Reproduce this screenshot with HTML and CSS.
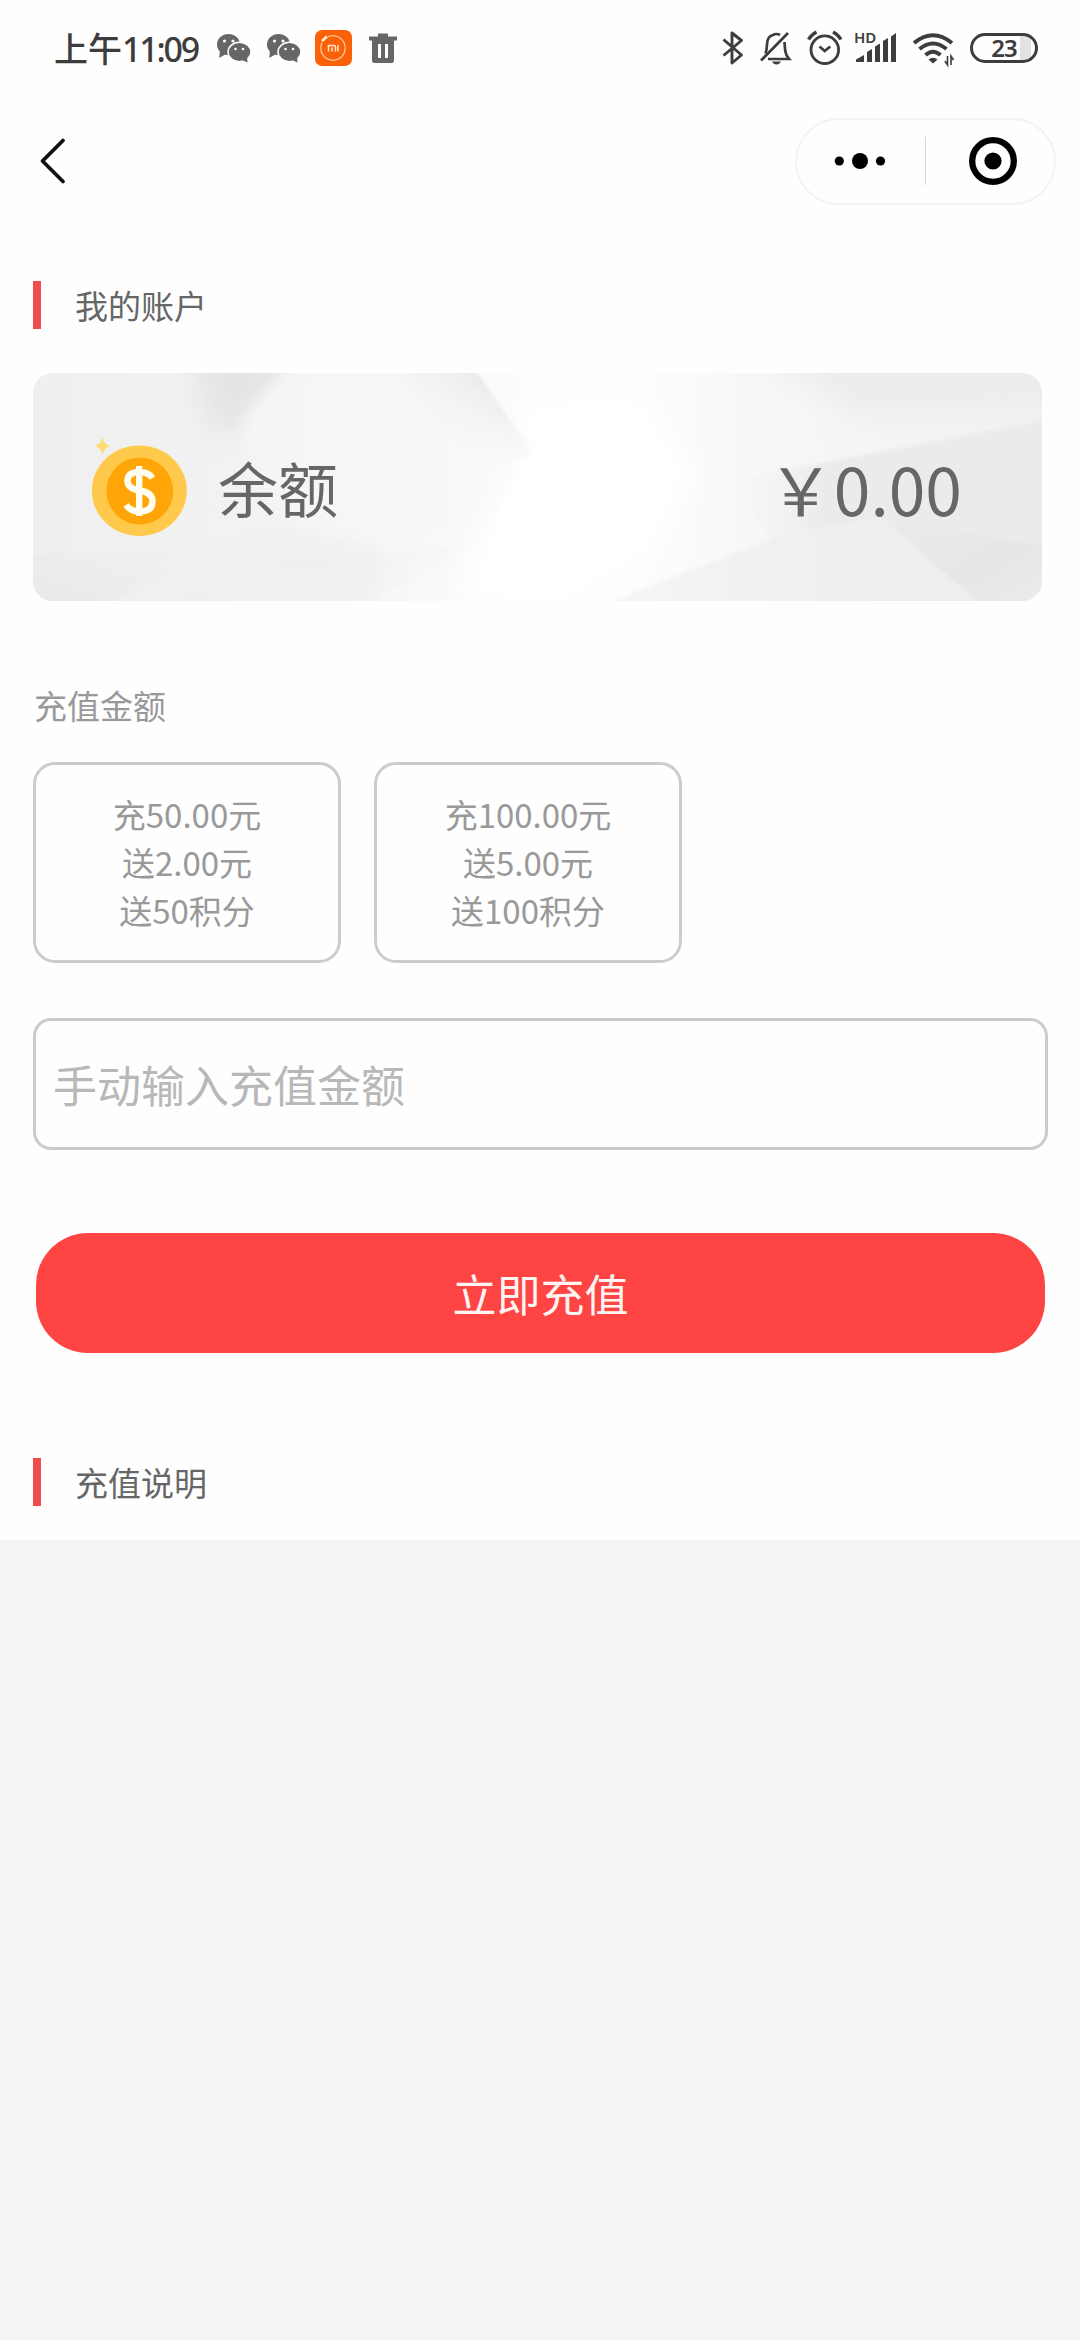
FILE: index.html
```html
<!DOCTYPE html>
<html lang="zh-CN">
<head>
<meta charset="utf-8">
<title>我的账户</title>
<link rel="stylesheet" href="styles.css">
</head>
<body>
<main class="page">
  <header class="status">
    <div class="time">上午<span class="clock">11:09</span></div>
    <svg class="ic wechat" viewBox="217 28 33 40" width="33" height="40"><g fill="#666"><ellipse cx="228.500" cy="44.500" rx="11.500" ry="10.500"/><path d="M220 51l-.8 7 6-3.500z"/><ellipse cx="239.500" cy="52" rx="11.500" ry="9.800" stroke="#fff" stroke-width="1.500"/><path d="M242 60l5.500 2.500-.5-6z"/></g><g fill="#fff"><circle cx="224.500" cy="41" r="1.600"/><circle cx="233" cy="41" r="1.600"/><circle cx="235.500" cy="49" r="1.300"/><circle cx="243" cy="49" r="1.300"/></g></svg>
    <svg class="ic wechat-2" viewBox="217 28 33 40" width="33" height="40"><g fill="#666"><ellipse cx="228.500" cy="44.500" rx="11.500" ry="10.500"/><path d="M220 51l-.8 7 6-3.500z"/><ellipse cx="239.500" cy="52" rx="11.500" ry="9.800" stroke="#fff" stroke-width="1.500"/><path d="M242 60l5.500 2.500-.5-6z"/></g><g fill="#fff"><circle cx="224.500" cy="41" r="1.600"/><circle cx="233" cy="41" r="1.600"/><circle cx="235.500" cy="49" r="1.300"/><circle cx="243" cy="49" r="1.300"/></g></svg>
    <svg class="ic mi" viewBox="315 28 37 40" width="37" height="40"><rect x="315" y="30" width="37" height="36" rx="7" fill="#fb6109"/><circle cx="333" cy="48" r="12.200" fill="none" stroke="#ffd9b0" stroke-width="1.100"/><path d="M321.500 41.500l6-5.500" stroke="#fb6109" stroke-width="7"/><path d="M322 41l5-4.500" stroke="#fff3d0" stroke-width="2.600"/><path d="M328.500 51.500v-6h5.500q1.500 0 1.500 1.500v4.500M332 47.500v4M338 45v6.500" fill="none" stroke="#ffe9cf" stroke-width="1.500"/></svg>
    <svg class="ic trash" viewBox="369 28 28 40" width="28" height="40"><path fill="#666" fill-rule="evenodd" d="M369 36.500h9v-3h10v3h9v4h-3v20q0 2.500-2.500 2.500h-17q-2.500 0-2.500-2.500v-20h-3zM378 44v14h3v-14zM385 44v14h3v-14z"/></svg>
    <span class="spacer"></span>
    <svg class="ic" viewBox="722 28 22 40" width="22" height="40"><path d="M723.500 39.500l18 15.500-9.500 8V33l9.500 7.500-18 15" fill="none" stroke="#3d3d3d" stroke-width="2.900" stroke-linejoin="round"/></svg>
    <svg class="ic g16" viewBox="760 28 31 40" width="31" height="40"><g fill="none" stroke="#3d3d3d" stroke-width="2.700"><path d="M761 60.500l27-27.500"/><path d="M765.500 53.500q1.500-4 1.500-9 0-8 6-9.500 3.500-2 7 0"/><path d="M784.500 42l.5 7q.5 6 4 10h-21"/></g><path d="M772 61.500h9q-1.500 3-4.500 3t-4.500-3z" fill="#3d3d3d"/></svg>
    <svg class="ic g16" viewBox="807 28 35 40" width="35" height="40"><g fill="none" stroke="#3d3d3d"><circle cx="824.800" cy="49.700" r="13.800" stroke-width="2.800"/><path d="M808.500 39.500q3-5 8-7.500M841 39.500q-3-5-8-7.500" stroke-width="3.400"/><path d="M819.500 46.500l5.200 4.500 5.500-4.500" stroke-width="2.800"/></g></svg>
    <svg class="ic g13" viewBox="855 28 42 40" width="42" height="40"><text x="854" y="43" class="hd">HD</text><path fill="#3d3d3d" d="M856 62v-2.500l8-4.500v7zM867 62v-10l5-3v13zM875 62v-15.500l5-3v18.500zM883 62v-21l5-3v24zM891 62v-25.500l5-3.500v29z"/></svg>
    <svg class="ic g15" viewBox="912 28 42 40" width="42" height="40"><g fill="none" stroke="#3d3d3d" stroke-width="3.900"><path d="M914 43q19-15.500 38 0"/><path d="M919.500 49q13.500-11 27 0"/><path d="M925.500 55q7.500-6.500 15 0"/></g><path d="M928.500 59.500q4.500-3.500 9 0l-4.500 4z" fill="#3d3d3d"/><path d="M947.500 56v9l-2.500-4M951 65v-9l2.500 4" stroke="#3d3d3d" stroke-width="1.600" fill="none"/></svg>
    <div class="battery g16"><span class="level">23</span></div>
  </header>

  <nav class="nav">
    <svg class="back" viewBox="38 136 32 50" width="32" height="50"><path d="M63 140.500L42.500 161l20.500 20.500" fill="none" stroke="#111" stroke-width="3.800" stroke-linecap="round" stroke-linejoin="round"/></svg>
    <div class="capsule">
      <svg class="more" viewBox="834 152 52 18" width="52" height="18"><circle cx="839.300" cy="161" r="4.600"/><circle cx="860" cy="161" r="8"/><circle cx="880.500" cy="161" r="4.600"/></svg>
      <span class="divider"></span>
      <svg class="target" viewBox="0 0 48 48" width="48" height="48"><circle cx="24" cy="24" r="20.800" fill="none" stroke="#000" stroke-width="6.300"/><circle cx="24" cy="24" r="8.600"/></svg>
    </div>
  </nav>

  <h2 class="heading account">我的账户</h2>

  <section class="card">
    <svg class="facets" viewBox="33 373 1009 228" preserveAspectRatio="none">
      <defs>
        <linearGradient id="base"><stop offset="0" stop-color="#efefef"/><stop offset=".2" stop-color="#f2f2f2"/><stop offset=".4" stop-color="#f9f9f9"/><stop offset=".5" stop-color="#fdfdfd"/><stop offset=".6" stop-color="#fdfdfd"/><stop offset=".72" stop-color="#f7f7f7"/><stop offset="1" stop-color="#f2f2f2"/></linearGradient>
        <linearGradient id="peak" gradientUnits="userSpaceOnUse" x1="420" y1="430" x2="495" y2="390"><stop offset="0" stop-color="#ebebeb" stop-opacity="0"/><stop offset="1" stop-color="#e9e9e9"/></linearGradient>
        <linearGradient id="peakfade" gradientUnits="userSpaceOnUse" x1="0" y1="380" x2="0" y2="450"><stop offset="0" stop-color="#fff"/><stop offset="1" stop-color="#fff" stop-opacity=".15"/></linearGradient>
        <mask id="peakmask"><rect x="380" y="360" width="180" height="110" fill="url(#peakfade)"/></mask>
        <linearGradient id="body" gradientUnits="userSpaceOnUse" x1="230" y1="0" x2="535" y2="0"><stop offset="0" stop-color="#f4f4f4"/><stop offset=".6" stop-color="#f7f7f7"/><stop offset="1" stop-color="#fcfcfc"/></linearGradient>
        <linearGradient id="low" x1="0" y1="1" x2="1" y2="0"><stop offset="0" stop-color="#e8e8e8"/><stop offset="1" stop-color="#efefef" stop-opacity=".1"/></linearGradient>
        <linearGradient id="wing" gradientUnits="userSpaceOnUse" x1="730" y1="0" x2="1042" y2="0"><stop offset="0" stop-color="#f3f3f3" stop-opacity="0"/><stop offset=".3" stop-color="#ebebeb"/><stop offset="1" stop-color="#ebebeb"/></linearGradient>
        <linearGradient id="floor" gradientUnits="userSpaceOnUse" x1="600" y1="0" x2="900" y2="0"><stop offset="0" stop-color="#f6f6f6"/><stop offset=".5" stop-color="#f1f1f1"/><stop offset="1" stop-color="#eee"/></linearGradient>
        <linearGradient id="mid"  gradientUnits="userSpaceOnUse" x1="110" y1="0" x2="480" y2="0"><stop offset="0" stop-color="#efefef"/><stop offset=".6" stop-color="#efefef"/><stop offset="1" stop-color="#f7f7f7"/></linearGradient>
        <linearGradient id="fin" x1="0" y1="0" x2="1" y2="1"><stop offset="0" stop-color="#ebebeb"/><stop offset=".6" stop-color="#e6e6e6"/><stop offset="1" stop-color="#ececec"/></linearGradient>
        <filter id="soft" x="-10%" y="-10%" width="120%" height="120%"><feGaussianBlur stdDeviation="1.500"/></filter>
        <filter id="smooth" x="-20%" y="-20%" width="140%" height="140%"><feGaussianBlur stdDeviation="7"/></filter>
        <filter id="haze" x="-20%" y="-30%" width="140%" height="160%"><feGaussianBlur stdDeviation="14"/></filter>
      </defs>
      <rect x="33" y="373" width="1009" height="228" fill="url(#base)"/>
      <g filter="url(#haze)">
        <path d="M520 400l120-10 60 80-40 80-100 60h-110z" fill="#fff" opacity=".9"/>
        <path d="M760 350h320v55l-220 12z" fill="#ececec"/>
        <path d="M190 340h120l-60 90-40 0z" fill="#e4e4e4"/>
      </g>
      <g filter="url(#smooth)">
        <path d="M300 355h180l50 90-60 100-170-10-60-80 5-40z" fill="url(#body)"/>
        <path d="M215 560l60-38 110 28-15 70H110z" fill="#efefef" opacity=".8"/>
      </g>
      <g filter="url(#soft)">
        <path d="M390 365h82l62 90-60 20z" fill="url(#peak)" mask="url(#peakmask)"/>
        <path d="M110 603l90-50 100 10 160-15-95 58z" fill="url(#mid)" opacity=".5"/>
        <path d="M28 556l187-12-105 59H28z" fill="url(#low)"/>
        <path d="M730 481l320-62v190H820z" fill="url(#wing)"/>
        <path d="M595 608l185-73 100-18 112 91z" fill="url(#floor)"/>
        <path d="M880 517l168 30v60h-64z" fill="url(#fin)"/>
      </g>
    </svg>
    <svg class="coin" viewBox="88 434 102 106" width="102" height="106"><ellipse cx="139.300" cy="490.700" rx="47.500" ry="45.300" fill="#ffca4b"/><circle cx="139.800" cy="491" r="33.500" fill="#ffa508"/><path d="M102.500 437q1.500 8 8 9-6.500 1.500-8 9-1.500-7.500-8-9 6.500-1 8-9z" fill="#ffdc72"/><path d="M152.500 478q-4-6-13-6-12 0-12 9 0 7.500 12 9.500 13 2 13 11 0 10-13 10-9 0-13.500-6.500M139.200 466v50" fill="none" stroke="#fffdf0" stroke-width="6.400"/></svg>
    <span class="label">余额</span>
    <span class="amount">&#xFFE5;0.00</span>
  </section>

  <h3 class="subtitle">充值金额</h3>
  <section class="options">
    <button class="option">充50.00元<br>送2.00元<br>送50积分</button>
    <button class="option">充100.00元<br>送5.00元<br>送100积分</button>
  </section>

  <input class="field" type="text" placeholder="手动输入充值金额">
  <button class="submit">立即充值</button>

  <h2 class="heading notes">充值说明</h2>
</main>
</body>
</html>
```
FILE: styles.css
```css
* { box-sizing: border-box; }
body {
  margin: 0;
  background: #f5f5f5;
  font-family: "Noto Sans CJK SC", sans-serif;
  color: #666;
}
h2, h3 { margin: 0; font-weight: 400; }
button { font-family: inherit; margin: 0; padding: 0; }
.page {
  display: flex;
  flex-direction: column;
  width: 1080px;
  height: 1540px;
  background: #fefefe;
}

/* status bar */
.status {
  display: flex;
  align-items: center;
  height: 96px;
  padding: 0 42px 0 54px;
}
.time {
  width: 163px;
  font-size: 34px;
  font-weight: 500;
  line-height: 40px;
  white-space: nowrap;
  color: #3d3d3d;
}
.clock {
  font-family: "Noto Sans", sans-serif;
  letter-spacing: -2.2px;
}
.ic { flex: none; overflow: visible; }
.wechat-2 { margin-left: 17px; }
.mi { margin-left: 15px; }
.g16 { margin-left: 16px; }
.trash { margin-left: 17px; }
.g13 { margin-left: 13px; }
.g15 { margin-left: 15px; }
.spacer { flex: 1; }
.hd {
  font: 600 15px "Noto Sans", sans-serif;
  fill: #3d3d3d;
}
.battery {
  display: flex;
  align-items: center;
  justify-content: center;
  width: 68px;
  height: 30px;
  border: 3px solid #3d3d3d;
  border-radius: 15px;
  background: linear-gradient(90deg, transparent 47px, #e2e2e2 47px, #e2e2e2 58px, transparent 58px);
}
.level {
  font: 600 24px/24px "Noto Sans", sans-serif;
  letter-spacing: -1px;
  color: #3d3d3d;
}

/* title bar */
.nav {
  display: flex;
  align-items: center;
  justify-content: space-between;
  height: 130px;
  padding: 0 24px 0 38px;
}
.capsule {
  display: flex;
  align-items: center;
  width: 261px;
  height: 87px;
  border: 2px solid #f3f3f3;
  border-radius: 44px;
  padding-left: 37px;
}
.divider {
  width: 1px;
  height: 48px;
  margin: 0 43px 0 39px;
  background: #d8d8d8;
}

.heading {
  display: flex;
  align-items: center;
  height: 48px;
  margin-left: 33px;
  padding: 0 0 0 34px;
  border-left: 8px solid #f04c4c;
  font-size: 33px;
  line-height: 46px;
}
.account { margin-top: 55px; }
.notes { margin-top: 105px; }

/* balance card */
.card {
  position: relative;
  display: flex;
  align-items: center;
  width: 1009px;
  height: 228px;
  margin: 44px 0 0 33px;
  padding: 0 80px 0 55px;
  border-radius: 20px;
  overflow: hidden;
}
.facets {
  position: absolute;
  inset: 0;
  width: 100%;
  height: 100%;
}
.coin, .label, .amount { position: relative; }
.label {
  margin-left: 28px;
  font-size: 60px;
  line-height: 88px;
}
.amount {
  margin-left: auto;
  font-size: 66px;
  line-height: 96px;
}

/* recharge form */
.subtitle {
  margin: 80px 0 0 34px;
  font-size: 33px;
  line-height: 48px;
  color: #999;
}
.options {
  display: flex;
  gap: 33px;
  margin: 33px 0 0 33px;
}
.option {
  width: 308px;
  height: 201px;
  padding-bottom: 2px;
  border: 3px solid #ccc;
  border-radius: 22px;
  background: #fefefe;
  font-size: 33px;
  line-height: 48px;
  color: #999;
}
.field {
  width: 1015px;
  height: 132px;
  margin: 55px 0 0 33px;
  padding: 0 17px;
  border: 3px solid #ccc;
  border-radius: 18px;
  background: #fefefe;
  font-family: inherit;
  font-size: 44px;
  color: #666;
}
.field::placeholder { color: #b8b8b8; }
.submit {
  width: 1009px;
  height: 120px;
  margin: 83px 0 0 36px;
  border: 0;
  border-radius: 52px;
  background: #ff4444;
  font-size: 44px;
  color: #fff5f3;
}
```
